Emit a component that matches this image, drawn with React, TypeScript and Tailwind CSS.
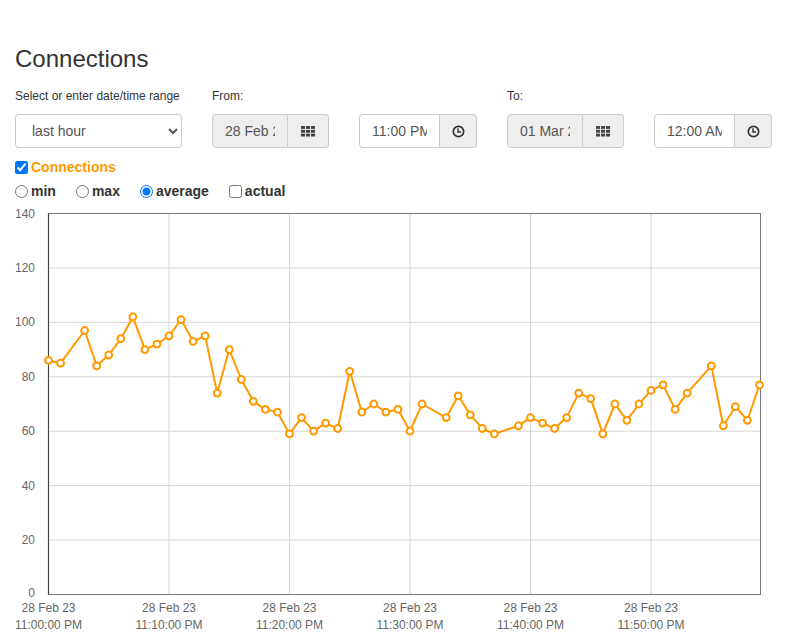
import React from "react";

const DATA: [number, number][] = [
  [0, 86], [1, 85], [3, 97], [4, 84], [5, 88], [6, 94], [7, 102], [8, 90], [9, 92], [10, 95],
  [11, 101], [12, 93], [13, 95], [14, 74], [15, 90], [16, 79], [17, 71], [18, 68], [19, 67], [20, 59],
  [21, 65], [22, 60], [23, 63], [24, 61], [25, 82], [26, 67], [27, 70], [28, 67], [29, 68], [30, 60],
  [31, 70], [33, 65], [34, 73], [35, 66], [36, 61], [37, 59], [39, 62], [40, 65], [41, 63], [42, 61],
  [43, 65], [44, 74], [45, 72], [46, 59], [47, 70], [48, 64], [49, 70], [50, 75], [51, 77], [52, 68],
  [53, 74], [55, 84], [56, 62], [57, 69], [58, 64], [59, 77],
];

const L = 48.5;
const R = 760.5;
const T = 213.5;
const B = 594.5;
const xOf = (m: number) => L + m * 12.05;
const yOf = (v: number) => B - (v * (B - T)) / 140;

function GridIcon() {
  const cells = [];
  for (let r = 0; r < 3; r++)
    for (let c = 0; c < 3; c++)
      cells.push(<rect key={`${r}-${c}`} x={c * 5} y={r * 3.8} width={4} height={2.9} fill="#444" />);
  return (
    <svg width="14" height="11" viewBox="0 0 14 11">
      {cells}
    </svg>
  );
}

function ClockIcon() {
  return (
    <svg width="13" height="13" viewBox="0 0 13 13">
      <circle cx="6.5" cy="6.5" r="5.2" fill="none" stroke="#333" strokeWidth="1.7" />
      <path d="M6 3.2 V7 H9" fill="none" stroke="#333" strokeWidth="1.4" />
    </svg>
  );
}

function DateGroup({ value }: { value: string }) {
  return (
    <div className="flex w-[117px] h-[34px]">
      <input
        readOnly
        value={value}
        className="w-[76px] h-[34px] px-[12px] text-[14px] text-[#555] bg-[#eee] border border-[#ccc] rounded-l-[4px] outline-none"
      />
      <div className="w-[41px] h-[34px] flex items-center justify-center bg-[#eee] border border-l-0 border-[#ccc] rounded-r-[4px]">
        <GridIcon />
      </div>
    </div>
  );
}

function TimeGroup({ value }: { value: string }) {
  return (
    <div className="flex w-[118px] h-[34px]">
      <input
        readOnly
        value={value}
        className="w-[81px] h-[34px] px-[12px] text-[14px] text-[#555] bg-white border border-[#ccc] rounded-l-[4px] outline-none"
      />
      <div className="w-[37px] h-[34px] flex items-center justify-center bg-[#eee] border border-l-0 border-[#ccc] rounded-r-[4px]">
        <ClockIcon />
      </div>
    </div>
  );
}

export default function App() {
  const path = DATA.map(([m, v], i) => `${i === 0 ? "M" : "L"}${xOf(m).toFixed(1)} ${yOf(v).toFixed(1)}`).join(" ");
  const yTicks = [0, 20, 40, 60, 80, 100, 120, 140];
  const xTicks = [
    [0, "11:00:00 PM"],
    [10, "11:10:00 PM"],
    [20, "11:20:00 PM"],
    [30, "11:30:00 PM"],
    [40, "11:40:00 PM"],
    [50, "11:50:00 PM"],
  ] as [number, string][];
  const xg = (k: number) => L + k * 120.5;

  return (
    <div className="w-[787px] h-[634px] bg-white text-[#333] font-['Liberation_Sans',Arial,sans-serif] overflow-hidden">
      <div className="px-[15px]">
        <h2 className="mt-[46px] h-[26px] leading-[26px] text-[24px] font-normal">Connections</h2>
        <div className="mt-[16px] flex gap-[30px] h-[17px] leading-[17px] text-[12px]">
          <div className="w-[167px]">Select or enter date/time range</div>
          <div className="w-[265px]">From:</div>
          <div className="w-[265px]">To:</div>
        </div>
        <div className="mt-[9px] flex gap-[30px]">
          <select
            defaultValue="last hour"
            className="w-[167px] h-[34px] pl-[12px] pr-[6px] text-[14px] text-[#555] bg-white border border-[#ccc] rounded-[4px] outline-none"
          >
            <option>last hour</option>
          </select>
          <DateGroup value="28 Feb 2023" />
          <TimeGroup value="11:00 PM" />
          <DateGroup value="01 Mar 2023" />
          <TimeGroup value="12:00 AM" />
        </div>
        <div className="mt-[9px] h-[20px] flex items-center text-[14px] font-bold">
          <input type="checkbox" defaultChecked className="m-0 w-[13px] h-[13px] mr-[3px]" />
          <span className="text-[#ff9900]">Connections</span>
        </div>
        <div className="mt-[4px] h-[20px] flex items-center gap-[20px] text-[14px] font-bold text-[#333]">
          <label className="flex items-center">
            <input type="radio" name="agg" className="m-0 w-[13px] h-[13px] mr-[3px]" />
            <span>min</span>
          </label>
          <label className="flex items-center">
            <input type="radio" name="agg" className="m-0 w-[13px] h-[13px] mr-[3px]" />
            <span>max</span>
          </label>
          <label className="flex items-center">
            <input type="radio" name="agg" defaultChecked className="m-0 w-[13px] h-[13px] mr-[3px]" />
            <span>average</span>
          </label>
          <label className="flex items-center">
            <input type="checkbox" className="m-0 w-[13px] h-[13px] mr-[3px]" />
            <span>actual</span>
          </label>
        </div>
      </div>
      <svg width="787" height="433" viewBox="0 201 787 433" className="block">
        {yTicks.slice(1, -1).map((v) => (
          <line key={v} x1={L} x2={R} y1={yOf(v)} y2={yOf(v)} stroke="#d6d6d6" strokeWidth="1" />
        ))}
        {[1, 2, 3, 4, 5].map((k) => (
          <line key={k} x1={xg(k)} x2={xg(k)} y1={T} y2={B} stroke="#d6d6d6" strokeWidth="1" />
        ))}
        <rect x={L} y={T} width={R - L} height={B - T} fill="none" stroke="#777" strokeWidth="1" />
        <line x1={L} x2={L} y1={T} y2={B} stroke="#444" strokeWidth="1.2" />
        {yTicks.map((v) => (
          <text
            key={v}
            x={35}
            y={v === 0 ? 597 : yOf(v) + 4}
            textAnchor="end"
            fontSize="12"
            fill="#666"
            fontFamily="'Liberation Sans', Arial, sans-serif"
          >
            {v}
          </text>
        ))}
        {xTicks.map(([k, t]) => (
          <g key={k} fontSize="12" fill="#666" fontFamily="'Liberation Sans', Arial, sans-serif" textAnchor="middle">
            <text x={xg(k / 10)} y={611.5}>28 Feb 23</text>
            <text x={xg(k / 10)} y={628.5}>{t}</text>
          </g>
        ))}
        <path d={path} fill="none" stroke="#ff9900" strokeWidth="2" strokeLinejoin="round" />
        {DATA.map(([m, v]) => (
          <circle key={m} cx={xOf(m)} cy={yOf(v)} r="3.4" fill="#fff" stroke="#ff9900" strokeWidth="2" />
        ))}
      </svg>
    </div>
  );
}
